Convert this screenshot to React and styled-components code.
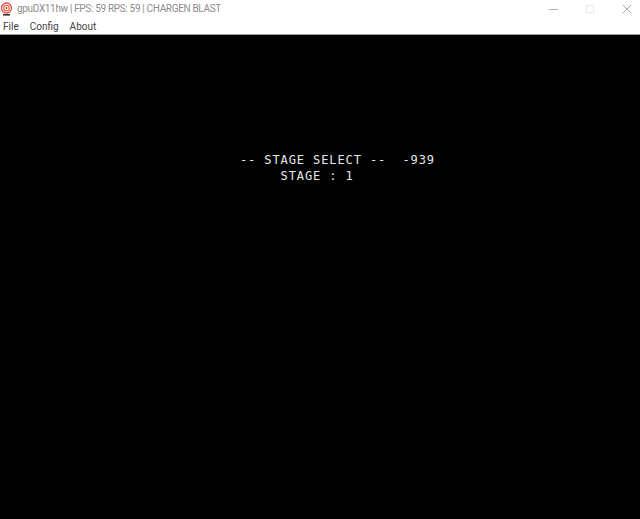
import styled, { createGlobalStyle } from 'styled-components';

const GlobalStyle = createGlobalStyle`
  html, body {
    margin: 0;
    padding: 0;
    background: #000;
  }
`;

const Window = styled.div`
  width: 640px;
  height: 519px;
  display: flex;
  flex-direction: column;
  overflow: hidden;
  font-family: "Roboto", "Open Sans", sans-serif;
`;

const TitleBar = styled.div`
  height: 17px;
  background: #fff;
  display: flex;
  align-items: center;
`;

const AppIcon = styled.svg`
  width: 13px;
  height: 14px;
  flex-shrink: 0;
`;

const Title = styled.div`
  margin-left: 4px;
  font-size: 10px;
  letter-spacing: -0.33px;
  color: #8c8c8c;
  white-space: pre;
`;

const Controls = styled.div`
  margin-left: auto;
  display: flex;
  align-items: center;
`;

const ControlButton = styled.div`
  width: 37px;
  height: 17px;
  padding-right: 8px;
  box-sizing: border-box;
  display: flex;
  align-items: center;
  justify-content: flex-end;
`;

const MenuBar = styled.div`
  height: 18px;
  box-sizing: border-box;
  background: #fff;
  display: flex;
  align-items: center;
  gap: 11px;
  padding: 1px 0 0 3px;
  border-bottom: 1px solid #a0a0a0;
`;

const MenuItem = styled.span`
  font-size: 10px;
  color: #444;
`;

const Screen = styled.div`
  flex: 1;
  background: #000;
  padding: 117px 0 0 240px;
`;

const GameText = styled.pre`
  margin: 0;
  font-family: "DejaVu Sans Mono", "Liberation Mono", monospace;
  font-size: 12px;
  line-height: 16px;
  letter-spacing: 0.9px;
  color: #e8e8e8;
`;

const App = () => {
  return (
    <Window>
      <GlobalStyle />
      <TitleBar>
        <AppIcon viewBox="0 0 13 14">
          <circle cx="6.5" cy="6" r="5" fill="none" stroke="#e0523f" strokeWidth="1.3" />
          <circle cx="6.5" cy="6" r="2.8" fill="none" stroke="#e0523f" strokeWidth="1.1" />
          <circle cx="6.5" cy="6" r="1" fill="#d9402e" />
          <rect x="3" y="12" width="7" height="1.6" fill="#333" />
        </AppIcon>
        <Title>gpuDX11hw | FPS: 59 RPS: 59 | CHARGEN BLAST</Title>
        <Controls>
          <ControlButton>
            <svg width="10" height="10" viewBox="0 0 10 10">
              <path d="M1 5.5H10" stroke="#b0b0b0" strokeWidth="1" />
            </svg>
          </ControlButton>
          <ControlButton>
            <svg width="10" height="10" viewBox="0 0 10 10">
              <rect x="1.5" y="1.5" width="7" height="7" fill="none" stroke="#e8e8e8" strokeWidth="1" />
            </svg>
          </ControlButton>
          <ControlButton>
            <svg width="10" height="10" viewBox="0 0 10 10">
              <path d="M1 1L9 9M9 1L1 9" stroke="#a8a8a8" strokeWidth="1" />
            </svg>
          </ControlButton>
        </Controls>
      </TitleBar>
      <MenuBar>
        <MenuItem>File</MenuItem>
        <MenuItem>Config</MenuItem>
        <MenuItem>About</MenuItem>
      </MenuBar>
      <Screen>
        <GameText>{'-- STAGE SELECT --  -939\n     STAGE : 1'}</GameText>
      </Screen>
    </Window>
  );
};

export default App;
